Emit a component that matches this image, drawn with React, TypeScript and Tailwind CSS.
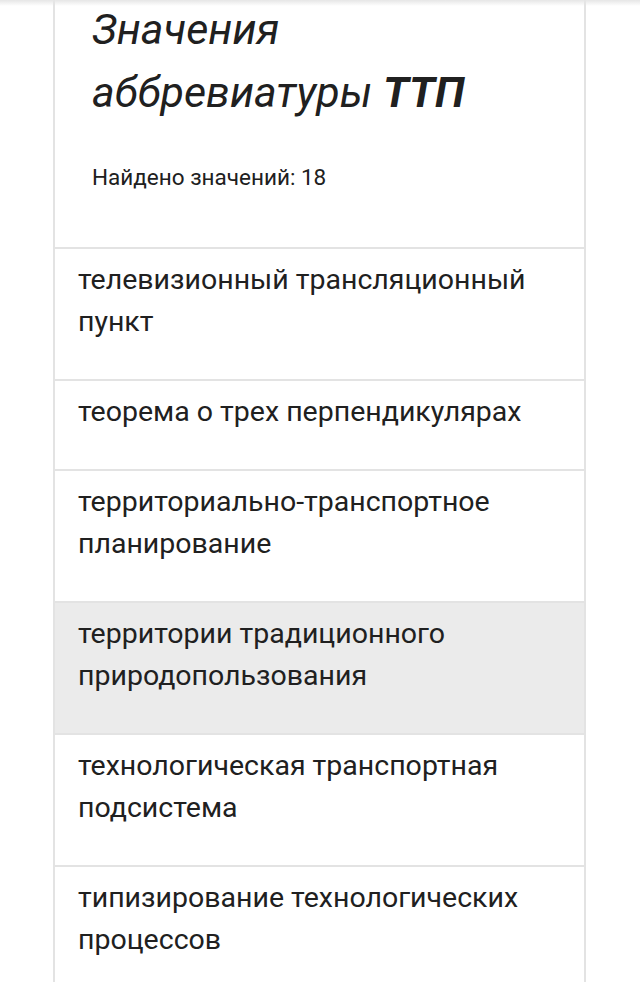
import React from "react";

const meanings: { text: string; active?: boolean }[] = [
  { text: "телевизионный трансляционный пункт" },
  { text: "теорема о трех перпендикулярах" },
  { text: "территориально-транспортное планирование" },
  { text: "территории традиционного природопользования", active: true },
  { text: "технологическая транспортная подсистема" },
  { text: "типизирование технологических процессов" },
];

export default function App() {
  return (
    <div
      className="relative h-[982px] w-[640px] overflow-hidden bg-white text-[#202020]"
      style={{ fontFamily: "Roboto, 'Noto Sans', Arial, sans-serif" }}
    >
      {/* soft shade under the browser toolbar */}
      <div className="pointer-events-none absolute inset-x-0 top-0 z-10 h-[6px] bg-gradient-to-b from-[#e6e6e6] to-transparent" />

      <div className="ml-[53px] w-[533px] border-x-2 border-[#e3e3e3]">
        <header className="-mt-[2px] border-b-2 border-[#e3e3e3] pb-[55px] pl-[37px]">
          <h1 className="text-[43px] font-normal italic leading-[63px]">
            Значения
            <br />
            аббревиатуры <b className="font-bold">ТТП</b>
          </h1>
          <p className="mt-[38px] text-[22.5px] leading-[30px]">Найдено значений: 18</p>
        </header>

        <ul>
          {meanings.map((m) => (
            <li
              key={m.text}
              className={
                m.active
                  ? "border-b-2 border-[#e3e3e3] bg-[#ebebeb] pb-[36px] pl-[23px] pr-[40px] pt-[10px] text-[28.5px] leading-[42px]"
                  : "border-b-2 border-[#e3e3e3] pb-[36px] pl-[23px] pr-[40px] pt-[10px] text-[28.5px] leading-[42px]"
              }
            >
              {m.text}
            </li>
          ))}
        </ul>
      </div>
    </div>
  );
}
